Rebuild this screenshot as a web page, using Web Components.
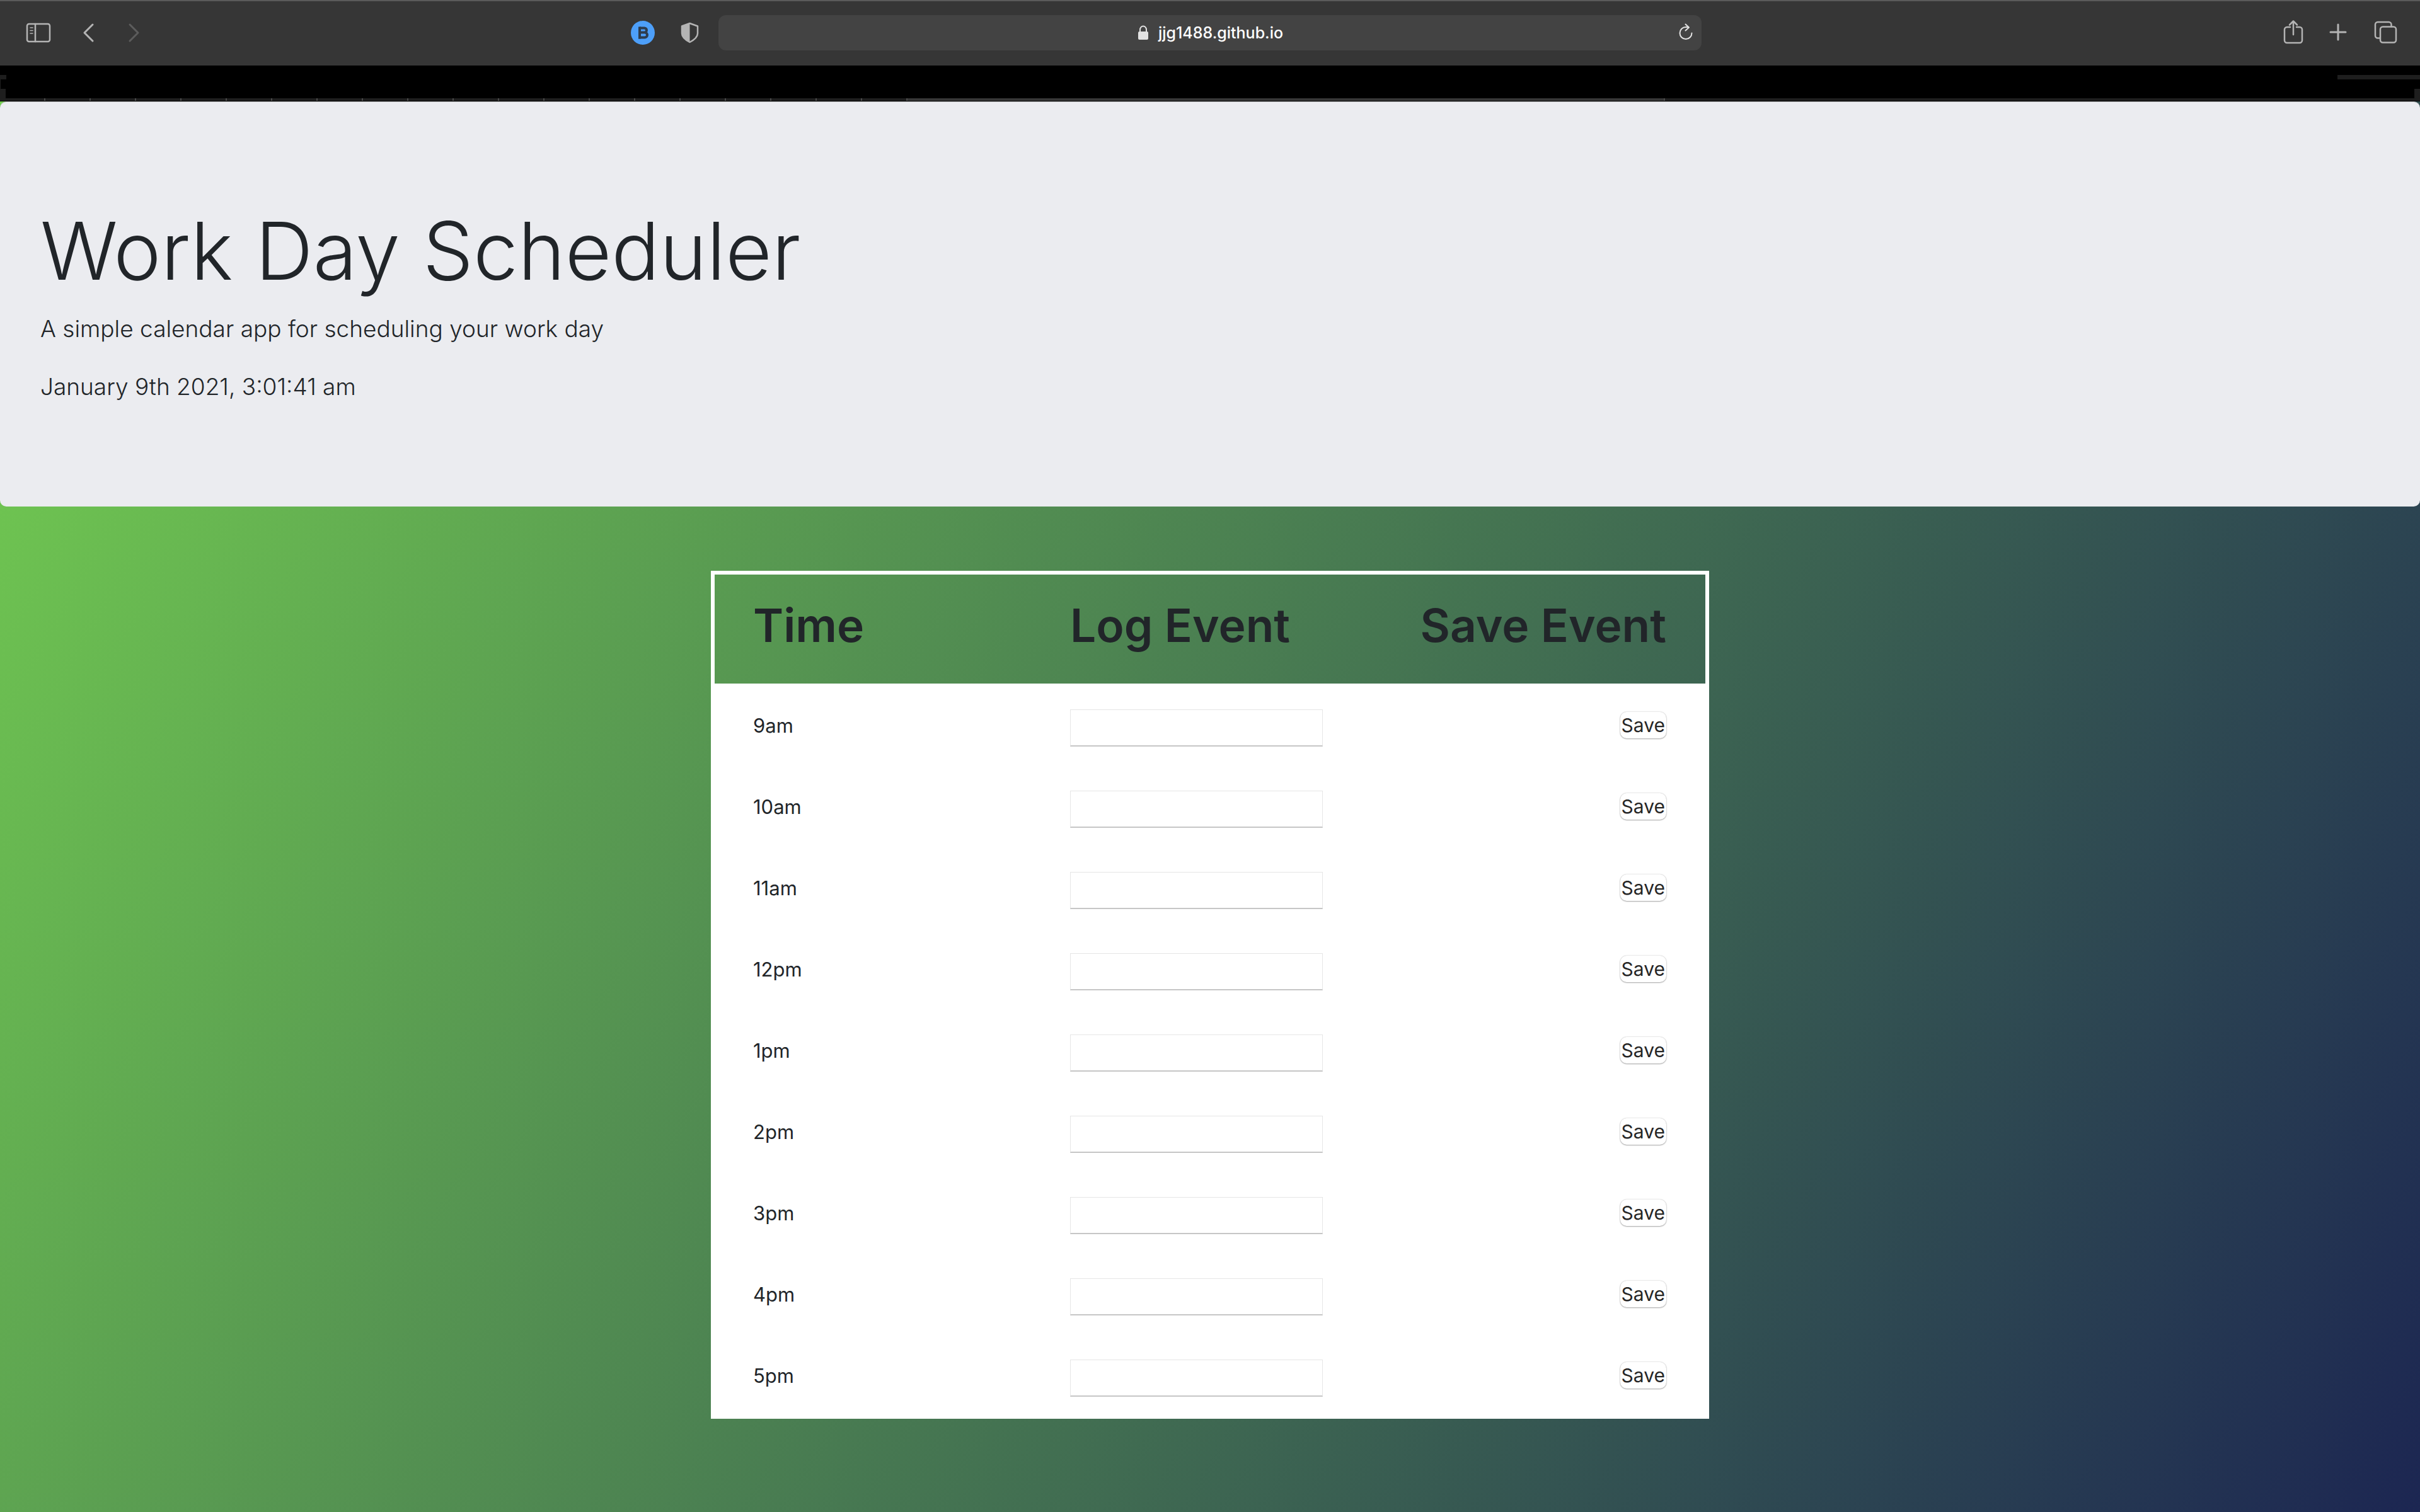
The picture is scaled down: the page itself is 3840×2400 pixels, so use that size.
<!DOCTYPE html>
<html lang="en">
<head>
<meta charset="utf-8">
<title>Work Day Scheduler</title>
<style>
html,body{margin:0;padding:0}
body{font-family:Inter,"Liberation Sans",sans-serif;color:#212529;min-height:100vh;background:#000}
</style>
</head>
<body>
<browser-bar></browser-bar>
<tab-edge></tab-edge>
<day-planner>
  <page-hero>
    <span slot="title">Work Day Scheduler</span>
    <span slot="lead">A simple calendar app for scheduling your work day</span>
    <span slot="date">January 9th 2021, 3:01:41 am</span>
  </page-hero>
  <event-board></event-board>
</day-planner>
<script>
const define = (name, html) => customElements.define(name, class extends HTMLElement {
  constructor() {
    super();
    this.attachShadow({ mode: 'open' }).innerHTML = html;
  }
});

define('browser-bar', `
<style>
:host{display:grid;grid-template-columns:1fr 1560px 1fr;align-items:center;height:104px;box-shadow:inset 0 2px #5a5a5a;background:#363636;color:#b4b4b4}
button{all:unset;display:flex}
svg{display:block;fill:none;stroke:currentColor;stroke-width:2.5;stroke-linecap:round;stroke-linejoin:round}
.left,.right,.nav,.ext{display:flex;align-items:center}
.left{justify-content:space-between;padding:0 28px 0 40px}
.nav{gap:48px}
.ext{gap:38px}
.dim{color:#5c5c5c}
.right{justify-content:flex-end;gap:37px;padding-right:34px}
.address{display:grid;grid-template-columns:1fr auto 1fr;align-items:center;height:56px;border-radius:12px;background:#434343;color:#fff;font-size:25px;line-height:32px;font-weight:500;padding:0 12px}
.url{display:flex;align-items:center;gap:14px;grid-column:2}
.url svg{color:#e2e2e2}
.reload{justify-self:end;color:#e2e2e2}
</style>
<div class="left">
  <div class="nav">
    <button aria-label="Show sidebar"><svg width="42" height="34" viewBox="0 0 42 34"><rect x="3" y="3" width="36" height="28" rx="3"/><path d="M16 3v28"/><path stroke-width="1.5" d="M8 9h4M8 13.500h4M8 18h4"/></svg></button>
    <button aria-label="Back"><svg width="24" height="34" viewBox="0 0 24 34"><path stroke-width="3" d="M17 4L4 17L17 30"/></svg></button>
    <button aria-label="Forward" class="dim"><svg width="24" height="34" viewBox="0 0 24 34"><path stroke-width="3" d="M4 4L17 17L4 30"/></svg></button>
  </div>
  <div class="ext">
    <button aria-label="Extension"><svg width="40" height="40" viewBox="0 0 40 40"><circle cx="20" cy="20" r="19" fill="#4d9ff9" stroke="none"/><g stroke="#2d3c4e" stroke-width="4" stroke-linejoin="miter" stroke-linecap="butt"><path d="M15 12.500h7.500a3.500 3.500 0 0 1 0 7H15M15 19.500h8a4 4 0 0 1 0 8H15z"/><path d="M15 10.500v19"/></g></svg></button>
    <button aria-label="Privacy report"><svg width="34" height="38" viewBox="0 0 34 38"><path d="M16.500 4L29 8.500V20c0 6-5 10-12.500 14C9 30 4 26 4 20V8.500z"/><path fill="currentColor" stroke="none" d="M16.500 4L4 8.500V20c0 6 5 10 12.500 14z"/></svg></button>
  </div>
</div>
<div class="address">
  <div class="url"><svg width="20" height="26" viewBox="0 0 20 26"><rect x="2" y="11" width="16" height="13" rx="2" fill="currentColor" stroke="none"/><path stroke-width="2" d="M5 12V8a5 5.500 0 0 1 10 0v4"/></svg><span>jjg1488.github.io</span></div>
  <button class="reload" aria-label="Reload"><svg width="26" height="32" viewBox="0 0 26 32"><path stroke-width="2" d="M22.500 16.500a9.500 9.500 0 1 1 -9.500 -9.500h4.500M12.500 2.500L18 7.500L12.500 12.500"/></svg></button>
</div>
<div class="right">
  <button aria-label="Share"><svg width="34" height="42" viewBox="0 0 34 42"><path d="M12 12H7a4 4 0 0 0-4 4v17a4 4 0 0 0 4 4h20a4 4 0 0 0 4-4V16a4 4 0 0 0-4-4h-5M17 24V2.500M11 8.500L17 2.500L23 8.500"/></svg></button>
  <button aria-label="New tab"><svg width="34" height="34" viewBox="0 0 34 34"><path stroke-width="3" d="M17 4v24M5 16h24"/></svg></button>
  <button aria-label="Tab overview"><svg width="42" height="40" viewBox="0 0 42 40"><path d="M12 28.500H9a4 4 0 0 1-4-4V7a4 4 0 0 1 4-4h17.500a4 4 0 0 1 4 4v3"/><rect x="13" y="10.500" width="25" height="25" rx="4"/></svg></button>
</div>`);

define('tab-edge', `
<style>
:host{display:flex;flex-direction:column;height:56px;background:#000}
.upper{height:15px}
.line{display:flex;justify-content:space-between;height:7px}
.line i{width:10px;background:#1e1e1e}
.line i+i{width:131px}
.gap{height:15px;border-left:1px solid #1e1e1e}
.low{display:flex;justify-content:space-between;height:15px}
.low i{width:9px;background:#1e1e1e}
.strip{display:grid;grid-template-columns:1440px 1202px 1fr;height:4px;background:#1e1e1e}
.ticks{background:repeating-linear-gradient(90deg,transparent 0 70px,#4a4a4a 70px 72px)}
.active{background:#363636;border-right:2px solid #4a4a4a;box-sizing:border-box}
</style>
<div class="upper"></div><div class="line"><i></i><i></i></div><div class="gap"></div><div class="low"><i></i><i></i></div>
<div class="strip"><span class="ticks"></span><span class="active"></span></div>`);

define('day-planner', `
<style>
:host{display:block;border-top:1px solid #000;min-height:calc(100vh - 160px);box-sizing:border-box;background:linear-gradient(120deg,#74cf51,#1c2652)}
</style>
<slot></slot>`);

define('page-hero', `
<style>
:host{display:block;box-sizing:border-box;border-top:1px solid #b5b7b8;padding:150px 64px 160px;border-radius:10px;background:#ebecf0}
h1{margin:0 0 8px;font-size:127px;line-height:172px;font-weight:300}
p{margin:0 0 32px;font-size:37px;line-height:60px;font-weight:300}
p:last-child{margin:0}
</style>
<h1><slot name="title"></slot></h1><p><slot name="lead"></slot></p><p><slot name="date"></slot></p>`);

define('event-board', `
<style>
:host{display:block;box-sizing:border-box;width:1584px;margin:102px auto 0;border:6px solid #fff}
table{width:100%;border-collapse:collapse;table-layout:fixed}
th,td{padding:0;text-align:left;vertical-align:middle}
th:first-child,td:first-child{width:564px;padding-left:61px;box-sizing:border-box}
th:last-child,td:last-child{text-align:right;padding-right:62px}
thead tr{height:173px}
thead th{font-size:73px;line-height:96px;font-weight:600;padding-bottom:12px}
tbody{background:#fff}
tbody td{box-sizing:border-box;height:129px;padding-top:4px;font-size:31px;line-height:48px}
tbody td:nth-child(2){padding-top:12px}
tbody td:last-child{padding-top:2px}
label{display:block}
input{display:block;box-sizing:border-box;width:401px;height:59px;padding:4px;border:1px solid #e6e6e6;border-bottom:2px solid #c6c6c6;background:#fff;font:inherit;outline:0}
button{display:block;box-sizing:border-box;margin-left:auto;height:42px;padding:0 2px;border:0;border-radius:10px;background:#fff;color:#262626;font:inherit;font-size:30px;line-height:42px;box-shadow:0 0 2px rgba(0,0,0,.25),0 1px 2px rgba(0,0,0,.3)}
</style>
<table>
<thead><tr><th scope="col">Time</th><th scope="col">Log Event</th><th scope="col">Save Event</th></tr></thead>
<tbody>${['9am','10am','11am','12pm','1pm','2pm','3pm','4pm','5pm'].map(t => `<tr><td><label for="e${t}">${t}</label></td><td><input id="e${t}" type="text"></td><td><button type="button">Save</button></td></tr>`).join('')}</tbody>
</table>`);
</script>
</body>
</html>
